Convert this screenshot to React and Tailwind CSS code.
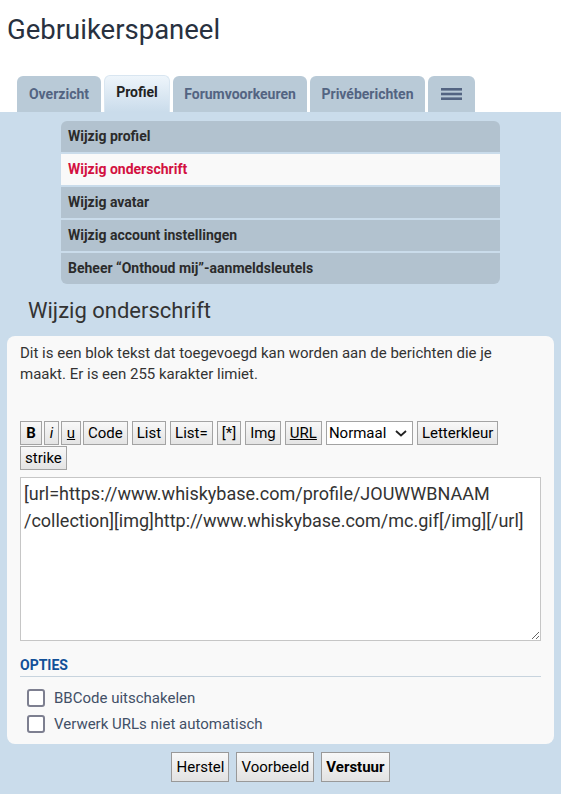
// Gebruikerspaneel — profiel / wijzig onderschrift

const TABS = [
  { label: "Overzicht", cls: "w-[84px]" },
  { label: "Profiel", cls: "w-[66px] ml-[3px]", active: true },
  { label: "Forumvoorkeuren", cls: "w-[134px] ml-[3px]" },
  { label: "Privéberichten", cls: "w-[115px] ml-[3px]" },
];

const SUBMENU = [
  "Wijzig profiel",
  "Wijzig onderschrift",
  "Wijzig avatar",
  "Wijzig account instellingen",
  "Beheer “Onthoud mij”-aanmeldsleutels",
];

const btn =
  "h-[24px] px-[4px] flex items-center justify-center border border-[#a3a3a3] bg-gradient-to-b from-[#f8f8f8] to-[#e4e4e4] text-[15px] leading-none text-black";

function Menu() {
  return (
    <svg width="21" height="12" viewBox="0 0 21 12">
      <rect x="0" y="0" width="21" height="2.6" fill="#536482" />
      <rect x="0" y="4.7" width="21" height="2.6" fill="#536482" />
      <rect x="0" y="9.4" width="21" height="2.6" fill="#536482" />
    </svg>
  );
}

function Check({ children }) {
  return (
    <div className="h-[26px] flex items-center">
      <span className="ml-[7px] w-[18px] h-[18px] rounded-[3px] border-2 border-[#7d7f90] bg-white" />
      <span className="ml-[9px] text-[15px] text-[#425067]">{children}</span>
    </div>
  );
}

export default function App() {
  return (
    <div className="w-[561px] h-[800px] bg-white font-['Roboto',sans-serif] text-[#333]">
      <h1 className="pt-[14px] pl-[7px] text-[27.5px] leading-[32px] text-[#28313f]">Gebruikerspaneel</h1>

      {/* Tabs */}
      <div className="mt-[29px] ml-[17px] flex items-end h-[37px]">
        {TABS.map(t => (
          <div
            key={t.label}
            className={
              t.active
                ? `${t.cls} h-[37px] pb-[3px] rounded-t-[6px] bg-gradient-to-b from-[#eef5fb] to-[#cadceb] border border-b-0 border-[#d9e6f1] flex items-center justify-center text-[14px] font-bold text-[#222]`
                : `${t.cls} h-[36px] rounded-t-[6px] bg-[#b9cad7] flex items-center justify-center text-[14px] font-bold text-[#536482]`
            }
          >
            {t.label}
          </div>
        ))}
        <div className="w-[47px] ml-[3px] h-[36px] rounded-t-[6px] bg-[#b9cad7] flex items-center justify-center">
          <Menu />
        </div>
      </div>

      {/* Blauw paneel */}
      <div className="bg-[#cadceb] pt-[9px] pb-[12px]">
        <div className="ml-[61px] w-[439px] rounded-[6px] overflow-hidden flex flex-col gap-[2px]">
          {SUBMENU.map((s, i) => (
            <div
              key={s}
              className={
                i === 1
                  ? "h-[31px] pl-[7px] flex items-center bg-[#f9f9f9] text-[14px] font-bold text-[#d31141]"
                  : "h-[31px] pl-[7px] flex items-center bg-[#b2c2cf] text-[14px] font-bold text-[#2b2b2b]"
              }
            >
              {s}
            </div>
          ))}
        </div>

        <h2 className="mt-[13px] ml-[28px] text-[22px] leading-[28px] text-[#333]">Wijzig onderschrift</h2>

        <div className="mt-[11px] mx-[7px] rounded-[8px] bg-[#f9f9f9] px-[13px] pt-[7px] pb-[7px]">
          <p className="text-[15px] leading-[21px] text-[#333]">
            Dit is een blok tekst dat toegevoegd kan worden aan de berichten die je<br />
            maakt. Er is een 255 karakter limiet.
          </p>

          {/* Toolbar */}
          <div className="mt-[36px] flex flex-wrap gap-y-[1px]">
            <span className={`${btn} w-[22px] mr-[2px] font-bold`}>B</span>
            <span className={`${btn} w-[15px] mr-[2px] italic`}>i</span>
            <span className={`${btn} w-[20px] mr-[2px]`}><span className="underline">u</span></span>
            <span className={`${btn} mr-[4px]`}>Code</span>
            <span className={`${btn} mr-[4px]`}>List</span>
            <span className={`${btn} mr-[4px]`}>List=</span>
            <span className={`${btn} mr-[4px]`}>[*]</span>
            <span className={`${btn} mr-[4px]`}>Img</span>
            <span className={`${btn} mr-[4px]`}><span className="underline">URL</span></span>
            <span className="h-[24px] w-[87px] mr-[4px] pl-[2px] flex items-center border border-[#a3a3a3] bg-white text-[15px] leading-none text-black">
              Normaal
              <svg className="ml-[9px]" width="12" height="7" viewBox="0 0 12 7">
                <polyline points="1,1 6,5.5 11,1" fill="none" stroke="#222" strokeWidth="1.8" />
              </svg>
            </span>
            <span className={`${btn} mr-[4px]`}>Letterkleur</span>
            <span className={btn}>strike</span>
          </div>

          <textarea
            readOnly
            className="mt-[7px] block w-full h-[164px] px-[3px] pt-[2px] border border-[#c6c6c6] bg-white text-[18px] leading-[27px] text-[#333] font-['Roboto',sans-serif] outline-none"
            defaultValue={"[url=https://www.whiskybase.com/profile/JOUWWBNAAM\n/collection][img]http://www.whiskybase.com/mc.gif[/img][/url]"}
          />

          <h3 className="mt-[16px] pb-[3px] border-b border-[#c8d4de] text-[14px] leading-[16px] font-bold text-[#115098]">OPTIES</h3>

          <div className="mt-[8px]">
            <Check>BBCode uitschakelen</Check>
            <Check>Verwerk URLs niet automatisch</Check>
          </div>
        </div>

        {/* Knoppen */}
        <div className="mt-[8px] flex justify-center gap-[7px]">
          <span className="h-[30px] px-[4px] flex items-center border border-[#999] bg-gradient-to-b from-[#f8f8f8] to-[#e2e2e2] text-[15px] text-black">Herstel</span>
          <span className="h-[30px] px-[4px] flex items-center border border-[#999] bg-gradient-to-b from-[#f8f8f8] to-[#e2e2e2] text-[15px] text-black">Voorbeeld</span>
          <span className="h-[30px] px-[4px] flex items-center border border-[#999] bg-gradient-to-b from-[#f8f8f8] to-[#e2e2e2] text-[15px] font-bold text-black">Verstuur</span>
        </div>
      </div>
    </div>
  );
}
